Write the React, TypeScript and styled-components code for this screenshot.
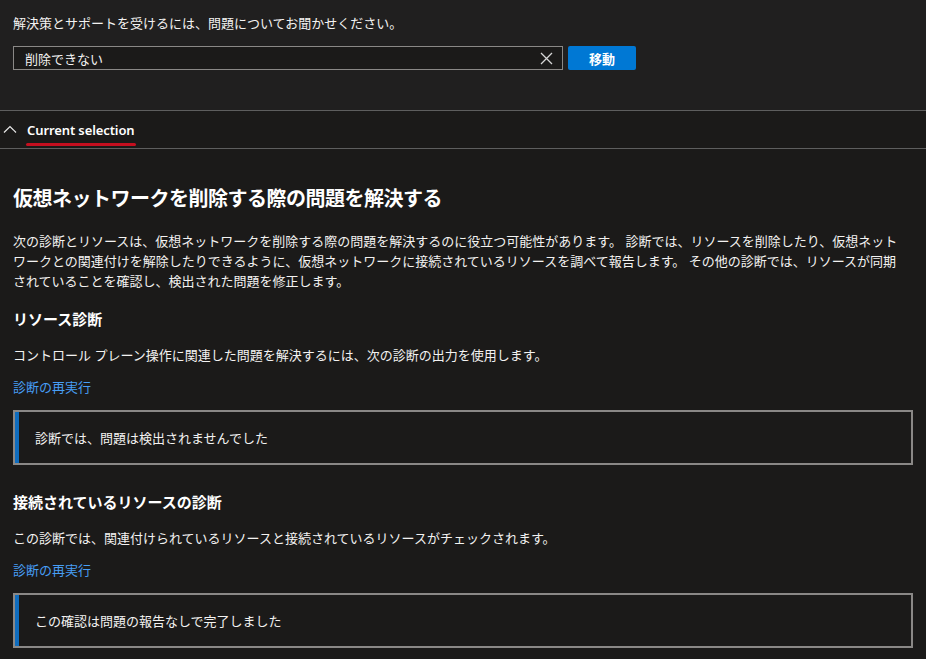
import React from "react";
import styled, { createGlobalStyle } from "styled-components";

const GlobalStyle = createGlobalStyle`
  html, body {
    margin: 0;
    padding: 0;
    background: #1b1a19;
  }
  body {
    font-family: "Noto Sans", "Noto Sans CJK JP", sans-serif;
    color: #f3f2f1;
    font-size: 13px;
  }
  * { box-sizing: border-box; }
`;

const Page = styled.div`
  width: 926px;
  min-height: 659px;
  background: #1b1a19;
`;

const TopPanel = styled.div`
  background: #201f1f;
  padding: 14px 13px 40px;
  border-bottom: 1px solid #5e5e5e;
`;

const Prompt = styled.p`
  margin: 0;
  font-size: 13px;
  line-height: 18px;
  color: #f3f2f1;
`;

const SearchRow = styled.div`
  display: flex;
  gap: 5px;
  margin-top: 14px;
  height: 24px;
`;

const SearchBox = styled.div`
  width: 550px;
  height: 24px;
  border: 1px solid #8a8886;
  background: #1b1a19;
  display: flex;
  align-items: center;
  padding: 0 9px 0 11px;
`;

const SearchInput = styled.input`
  flex: 1;
  min-width: 0;
  background: transparent;
  border: none;
  outline: none;
  color: #f3f2f1;
  font-family: "Noto Sans", "Noto Sans CJK JP", sans-serif;
  font-size: 13px;
  padding: 0;
`;

const ClearButton = styled.button`
  width: 14px;
  height: 14px;
  padding: 0;
  border: none;
  background: transparent;
  display: flex;
  align-items: center;
  justify-content: center;
  color: #d6d6d6;
`;

const GoButton = styled.button`
  width: 68px;
  height: 24px;
  border: none;
  border-radius: 2px;
  background: #0078d4;
  color: #ffffff;
  font-family: "Noto Sans", "Noto Sans CJK JP", sans-serif;
  font-weight: 700;
  font-size: 13px;
  padding: 0;
`;

const AccordionHeader = styled.div`
  display: flex;
  align-items: center;
  gap: 10px;
  height: 38px;
  padding-left: 3px;
  border-bottom: 1px solid #5e5e5e;
  color: #f3f2f1;
`;

const TabLabel = styled.span`
  position: relative;
  font-family: "Noto Sans", sans-serif;
  font-weight: 600;
  font-size: 13px;
  line-height: 18px;
  letter-spacing: -0.1px;
  color: #ffffff;
  &::after {
    content: "";
    position: absolute;
    left: -1px;
    right: -1px;
    top: calc(100% + 4px);
    height: 3px;
    border-radius: 2px;
    background: #c50f1f;
  }
`;

const Content = styled.div`
  padding: 36px 13px 40px;
`;

const Title = styled.h1`
  margin: 0;
  font-size: 20px;
  line-height: 28px;
  font-weight: 700;
  letter-spacing: -0.5px;
  color: #ffffff;
`;

const Intro = styled.p`
  margin: 18px 0 0;
  padding-right: 10px;
  font-size: 13px;
  line-height: 20px;
`;

const Section = styled.section<{ $gap: number }>`
  margin-top: ${(p) => p.$gap}px;
`;

const SectionTitle = styled.h2`
  margin: 0;
  font-size: 15px;
  line-height: 22px;
  font-weight: 700;
  color: #ffffff;
`;

const Description = styled.p`
  margin: 15px 0 0;
  font-size: 13px;
  line-height: 20px;
`;

const RerunLink = styled.a`
  display: block;
  margin-top: 12px;
  font-size: 13px;
  line-height: 20px;
  color: #479ef5;
  text-decoration: none;
  cursor: pointer;
`;

const Callout = styled.div`
  margin-top: 13px;
  height: 55px;
  border: 2px solid #8a8886;
  box-shadow: inset 4px 0 0 #0f6cbd;
  display: flex;
  align-items: center;
  padding-left: 20px;
  font-size: 13px;
  line-height: 20px;
`;

const ChevronUp = () => (
  <svg width="14" height="13" viewBox="0 0 14 13" fill="none">
    <path d="M1 9.5 L7 3.5 L13 9.5" stroke="#e8e8e8" strokeWidth="1.2" />
  </svg>
);

const CloseIcon = () => (
  <svg width="13" height="13" viewBox="0 0 13 13" fill="none">
    <path d="M1 1 L12 12 M12 1 L1 12" stroke="currentColor" strokeWidth="1.3" />
  </svg>
);

type Diag = {
  title: string;
  description: string;
  result: string;
  gap: number;
};

const diagnostics: Diag[] = [
  {
    title: "リソース診断",
    description:
      "コントロール プレーン操作に関連した問題を解決するには、次の診断の出力を使用します。",
    result: "診断では、問題は検出されませんでした",
    gap: 17,
  },
  {
    title: "接続されているリソースの診断",
    description:
      "この診断では、関連付けられているリソースと接続されているリソースがチェックされます。",
    result: "この確認は問題の報告なしで完了しました",
    gap: 26,
  },
];

export default function App() {
  return (
    <Page>
      <GlobalStyle />
      <TopPanel>
        <Prompt>解決策とサポートを受けるには、問題についてお聞かせください。</Prompt>
        <SearchRow>
          <SearchBox>
            <SearchInput defaultValue="削除できない" />
            <ClearButton aria-label="クリア">
              <CloseIcon />
            </ClearButton>
          </SearchBox>
          <GoButton>移動</GoButton>
        </SearchRow>
      </TopPanel>
      <AccordionHeader>
        <ChevronUp />
        <TabLabel>Current selection</TabLabel>
      </AccordionHeader>
      <Content>
        <Title>仮想ネットワークを削除する際の問題を解決する</Title>
        <Intro>
          次の診断とリソースは、仮想ネットワークを削除する際の問題を解決するのに役立つ可能性があります。 診断では、リソースを削除したり、仮想ネットワークとの関連付けを解除したりできるように、仮想ネットワークに接続されているリソースを調べて報告します。 その他の診断では、リソースが同期されていることを確認し、検出された問題を修正します。
        </Intro>
        {diagnostics.map((d) => (
          <Section key={d.title} $gap={d.gap}>
            <SectionTitle>{d.title}</SectionTitle>
            <Description>{d.description}</Description>
            <RerunLink>診断の再実行</RerunLink>
            <Callout>{d.result}</Callout>
          </Section>
        ))}
      </Content>
    </Page>
  );
}
